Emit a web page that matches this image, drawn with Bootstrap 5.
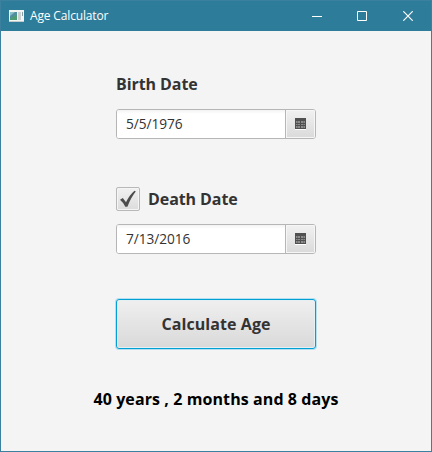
<!DOCTYPE html>
<html lang="en">
<head>
<meta charset="utf-8">
<title>Age Calculator</title>
<link href="https://cdn.jsdelivr.net/npm/bootstrap@5.3.0/dist/css/bootstrap.min.css" rel="stylesheet">
<style>
body{font-family:"Open Sans","Noto Sans",sans-serif;background:#f4f4f4;color:#333}
.app-window{width:432px;height:452px;border:1px solid #3b819f;background:#f4f4f4}
.title-bar{height:30px;background:#2d7d9a;color:#fff;padding-left:8px}
.title-text{font-size:12px;line-height:16px;margin-left:6px;letter-spacing:-.15px}
.win-btn{width:45px;height:30px;background:none;border:0;color:#fff}
.win-close{width:47px}
.form-area{width:200px;margin:0 auto;padding-top:41px}
.field-title{font-size:16px;line-height:24px;font-weight:700;white-space:nowrap;letter-spacing:-.08px}
.date-box{height:30px;margin-top:13px;border:1px solid #b6b6b6;border-radius:3px;background:#fff;overflow:hidden}
.date-box .form-control{border:0;border-radius:0;background:linear-gradient(#f3f3f3,#fff 4px);font-size:13.7px;line-height:20px;padding:0 9px;color:#333;letter-spacing:-.05px;box-shadow:none}
.date-box .pick{width:30px;border:0;border-left:1px solid #b6b6b6;border-radius:0;padding:0;background:linear-gradient(#f1f1f1,#dadada);box-shadow:inset 0 0 0 1px #f6f6f6}
.death-row{margin-top:48px}
.tick-box{width:24px;height:24px;border:1px solid #b8b8b8;border-radius:2px;background:linear-gradient(#f1f1f1,#dcdcdc);box-shadow:inset 0 0 0 1px #f5f5f5;margin-right:8px}
.calc-btn,.calc-btn:hover{height:50px;margin-top:45px;padding:0;border:1px solid #039ed3;border-radius:3px;background:linear-gradient(#efefef,#d9d9d9);box-shadow:0 0 0 1px #b5e0ef,inset 0 0 0 1px #e5f0f3;color:#333;font-size:16px;font-weight:700;letter-spacing:.08px}
.result-text{margin-top:38px;font-size:16px;line-height:24px;font-weight:700;color:#000;white-space:nowrap;letter-spacing:.09px}
svg{display:block}
</style>
</head>
<body>
<main class="app-window overflow-hidden">
<header class="title-bar d-flex align-items-center">
<svg width="15" height="12" viewBox="0 0 15 12"><path fill="#f3f5f5" d="M0 0h15v12H0z"/><path fill="#518fa0" d="M1 2h7v8H1z"/><path fill="#8cc0c9" d="M1 2h5L1 6z"/><path fill="#4e9a73" d="M1 8l7-3v5H1z"/><path fill="#c9d0d2" d="M9 2h3v8H9z"/><path fill="#8d9da2" d="M13 2h1v4h-1z"/><path fill="#c3cacc" d="M0 11h15v1H0z"/></svg>
<span class="title-text">Age Calculator</span>
<div class="d-flex ms-auto">
<button class="win-btn d-flex align-items-center justify-content-center p-0" aria-label="Minimize"><svg width="10" height="10"><path fill="#fff" d="M0 5h10v1H0z"/></svg></button>
<button class="win-btn d-flex align-items-center justify-content-center p-0" aria-label="Maximize"><svg width="10" height="10"><path fill="none" stroke="#fff" d="M.5.5h9v9h-9z"/></svg></button>
<button class="win-btn win-close d-flex align-items-center justify-content-center p-0" aria-label="Close"><svg width="10" height="10"><path fill="none" stroke="#fff" stroke-width="1.2" d="M.3.3l9.4 9.4M9.7.3L.3 9.7"/></svg></button>
</div>
</header>
<section class="form-area">
<label class="field-title d-block" for="birth">Birth Date</label>
<div class="date-box d-flex">
<input id="birth" class="form-control" value="5/5/1976">
<button class="pick btn flex-shrink-0 d-flex align-items-center justify-content-center" aria-label="Choose birth date"><svg width="11" height="12"><path fill="#fff" d="M0 11h11v1H0z"/><path fill="#505050" d="M0 0h11v11H0z"/><path fill="#8c8c8c" d="M1 3h4v2H1zM6 3h4v2H6zM1 6h4v1H1zM6 6h4v1H6zM1 8h4v2H1zM6 8h4v2H6z"/><path stroke="#505050" stroke-opacity=".45" d="M2.5 3v7M8.5 3v7"/></svg></button>
</div>
<div class="death-row d-flex align-items-center">
<span class="tick-box d-flex align-items-center justify-content-center" role="checkbox" aria-checked="true"><svg width="18" height="18"><path fill="#4d4d4d" d="M1 9.8l2.8-1.8L7 12.3Q10.5 5 15.5.8l1.3.8Q12.3 7 8.4 16.7H6.3Q4.3 12.5 1 9.8z"/></svg></span>
<label class="field-title" for="death">Death Date</label>
</div>
<div class="date-box d-flex">
<input id="death" class="form-control" value="7/13/2016">
<button class="pick btn flex-shrink-0 d-flex align-items-center justify-content-center" aria-label="Choose death date"><svg width="11" height="12"><path fill="#fff" d="M0 11h11v1H0z"/><path fill="#505050" d="M0 0h11v11H0z"/><path fill="#8c8c8c" d="M1 3h4v2H1zM6 3h4v2H6zM1 6h4v1H1zM6 6h4v1H6zM1 8h4v2H1zM6 8h4v2H6z"/><path stroke="#505050" stroke-opacity=".45" d="M2.5 3v7M8.5 3v7"/></svg></button>
</div>
<button class="calc-btn btn w-100">Calculate Age</button>
</section>
<p class="result-text text-center mb-0">40 years , 2 months and 8 days</p>
</main>
<script src="https://cdn.jsdelivr.net/npm/bootstrap@5.3.0/dist/js/bootstrap.bundle.min.js"></script>
</body>
</html>
